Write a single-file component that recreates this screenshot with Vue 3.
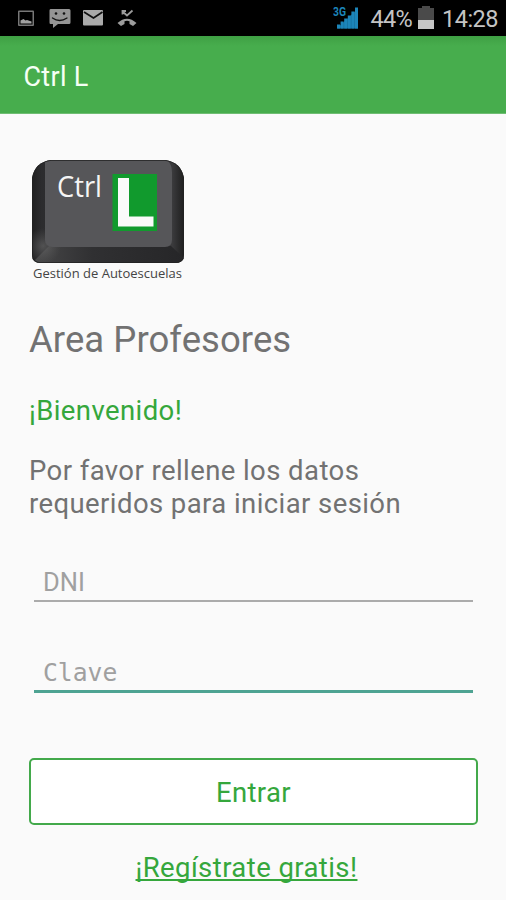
<script setup>
import { ref } from 'vue'

const dni = ref('')
const clave = ref('')
const bars = [4, 7, 10, 13, 17, 21]
</script>

<template>
  <div class="screen">
    <header class="status">
      <svg class="notifications" width="150" height="36" viewBox="0 0 150 36">
        <path fill="#777" fill-rule="evenodd" d="M19 10.500h14q1 0 1 1v13.500q0 1-1 1h-14q-1 0-1-1v-13.500q0-1 1-1zM19.500 12v12.500h13v-12.500z" />
        <path fill="#a2a2a2" d="M20.500 23.500v-3l3-1.500 2 1.500 1.500-.5 4.500 1.500v2z" />
        <path fill="#949494" d="M50.500 9h18.500q1.500 0 1.500 1.500v12q0 1.500-1.500 1.500h-11l-5 4v-4h-2.500q-1 0-1-1.500v-12q0-1.500 1-1.500z" />
        <path fill="none" stroke="#111" stroke-width="1.300" stroke-linecap="round" d="M52.500 18q7 5 14.500 0" />
        <circle cx="56" cy="13.500" r="1.300" fill="#111" />
        <circle cx="64" cy="13.500" r="1.300" fill="#111" />
        <rect x="83" y="10" width="20" height="15.500" rx="1" fill="#aaa" />
        <path fill="none" stroke="#111" stroke-width="1.800" d="M84 12l9.500 6 9-6" />
        <path fill="none" stroke="#9c9c9c" stroke-width="1.800" d="M122.500 14.500v-3.500h3.500M122.500 11.500l4.500 4 5.500-5" />
        <path fill="#9c9c9c" d="M117.500 23q9.500-8.500 19 0l-3.500 3-3.500-2v-2.800q-2.500-.7-5 0v2.800l-3.500 2z" />
      </svg>
      <div class="system">
        <svg width="27" height="28" viewBox="0 0 27 28">
          <path fill="#166d99" d="M4 24.500l21-20v20z" />
          <rect
            v-for="(h, i) in bars" :key="i"
            :x="4 + i * 3.600" :y="24.500 - h" width="3" :height="h" fill="#1c85b9"
          />
          <text class="network" x="0" y="12" textLength="13" lengthAdjust="spacingAndGlyphs">3G</text>
        </svg>
        <span class="percent">44%</span>
        <svg class="battery" width="16" height="23" viewBox="0 0 16 23">
          <path fill="#4a4a4a" d="M4 0h8v2h4v12h-16v-12h4z" />
          <path fill="#c6c6c6" d="M0 14h16v9h-16z" />
        </svg>
        <span class="time">14:28</span>
      </div>
    </header>

    <div class="appbar"><span>Ctrl L</span></div>

    <main class="content">
      <svg class="logo" width="156" height="126" viewBox="0 0 156 126">
        <defs>
          <linearGradient id="side" x1="0" y1="0" x2="1" y2="0">
            <stop offset="0" stop-color="#1c1c1c" />
            <stop offset=".08" stop-color="#2c2c2e" />
            <stop offset=".92" stop-color="#3a3a3c" />
            <stop offset="1" stop-color="#1c1c1c" />
          </linearGradient>
          <linearGradient id="bottom" x1="0" y1="0" x2="1" y2="0">
            <stop offset="0" stop-color="#484849" />
            <stop offset=".4" stop-color="#303032" />
            <stop offset="1" stop-color="#262628" />
          </linearGradient>
          <radialGradient id="glow">
            <stop offset="0" stop-color="#777" stop-opacity=".5" />
            <stop offset="1" stop-color="#666" stop-opacity="0" />
          </radialGradient>
          <clipPath id="key">
            <path d="M3 20Q6 4 22 2h114q16 2 19 18v77q0 8-9 8h-134q-9 0-9-8z" />
          </clipPath>
        </defs>
        <g clip-path="url(#key)">
          <rect width="156" height="106" fill="url(#side)" />
          <path d="M3 105l17-17h122l13 12v6h-152z" fill="url(#bottom)" />
          <ellipse cx="14" cy="88" rx="18" ry="18" fill="url(#glow)" />
          <path d="M16 2h122q5 4 5 12v68q0 7-7 7h-112q-8 0-8-7z" fill="#565659" />
          <path d="M3 20Q6 4 22 2h114q16 2 19 18v77q0 8-9 8h-134q-9 0-9-8z" fill="none" stroke="#222" stroke-width="1.600" />
        </g>
        <rect x="83.500" y="16" width="44.500" height="57" fill="#119a2d" />
        <path d="M89 20h11v38.500h24.500v10h-35.500z" fill="#fafafa" />
        <text class="logo-ctrl" x="28" y="39" textLength="45" lengthAdjust="spacingAndGlyphs">Ctrl</text>
        <text class="logo-caption" x="4" y="120" textLength="149" lengthAdjust="spacingAndGlyphs">Gestión de Autoescuelas</text>
      </svg>

      <h1>Area Profesores</h1>
      <p class="welcome">¡Bienvenido!</p>
      <p class="hint">Por favor rellene los datos<br>requeridos para iniciar sesión</p>

      <input v-model="dni" class="field" type="text" placeholder="DNI">
      <input v-model="clave" class="field secret" type="password" placeholder="Clave">

      <button class="enter" type="button">Entrar</button>
      <a class="register" href="#">¡Regístrate gratis!</a>
    </main>
  </div>
</template>

<style>
body { margin: 0; background: #fafafa; }
</style>

<style scoped>
.screen {
  width: 506px;
  height: 900px;
  overflow: hidden;
  background: #fafafa;
  font-family: Roboto, "Noto Sans", sans-serif;
  color: #727272;
}
.status {
  display: flex;
  justify-content: space-between;
  height: 36px;
  background: #000;
}
.system {
  display: flex;
  align-items: center;
  padding-right: 8px;
  color: #c4c4c4;
  font-size: 23.5px;
  line-height: 36px;
}
.network { font: 700 12px Roboto, sans-serif; fill: #1c85b9; }
.percent { margin-left: 10px; letter-spacing: -0.7px; padding-top: 2px; }
.battery { margin: 0 8px 1px 6px; }
.time { letter-spacing: -0.5px; padding-top: 2px; }
.appbar {
  display: flex;
  align-items: center;
  height: 78px;
  box-sizing: border-box;
  padding: 4px 23.5px 0;
  background: linear-gradient(#3fa044, #47ad4d 10px);
  color: #f5fff5;
  font-size: 27px;
  letter-spacing: 0.3px;
  border-bottom: 1px solid #6fbd73;
}
.content {
  display: flex;
  flex-direction: column;
  padding: 44px 28px 0 29px;
}
.logo { display: block; }
.logo-ctrl { font: 29px "Open Sans", sans-serif; fill: #f5f5f5; }
.logo-caption { font: 12.5px "Open Sans", sans-serif; fill: #444; }
h1 {
  margin: 30px 0 0;
  font-size: 36.5px;
  font-weight: 400;
  line-height: 52px;
  letter-spacing: 0.05px;
}
p { margin: 0; font-size: 27.5px; letter-spacing: 0.42px; }
.welcome { margin-top: 26px; line-height: 38px; color: #35a73c; }
.hint { margin-top: 24px; line-height: 33.3px; }
.field {
  box-sizing: border-box;
  margin: 42px 5px 0;
  height: 39px;
  padding: 2px 9px 0;
  border: 0;
  border-bottom: 2px solid #ababab;
  outline: 0;
  background: transparent;
  font: 25.5px Roboto, sans-serif;
  color: #555;
}
.field::placeholder { color: #a0a0a0; opacity: 1; }
.secret {
  margin-top: 51px;
  height: 40px;
  border-bottom: 3px solid #4ea392;
  font: 24.700px "DejaVu Sans Mono", monospace;
}
.enter {
  height: 67px;
  margin-top: 65px;
  padding: 2px 0 0;
  border: 2px solid #43a94b;
  border-radius: 5px;
  background: #fff;
  color: #35a73c;
  font: 27.5px Roboto, sans-serif;
  letter-spacing: 0.35px;
}
.register {
  align-self: center;
  margin: 25px 0 0 -14px;
  color: #35a73c;
  font-size: 27.5px;
  line-height: 36px;
  letter-spacing: 0.42px;
  text-decoration: underline;
  text-decoration-thickness: 1.5px;
  text-underline-offset: 2px;
  text-decoration-skip-ink: none;
}
</style>
